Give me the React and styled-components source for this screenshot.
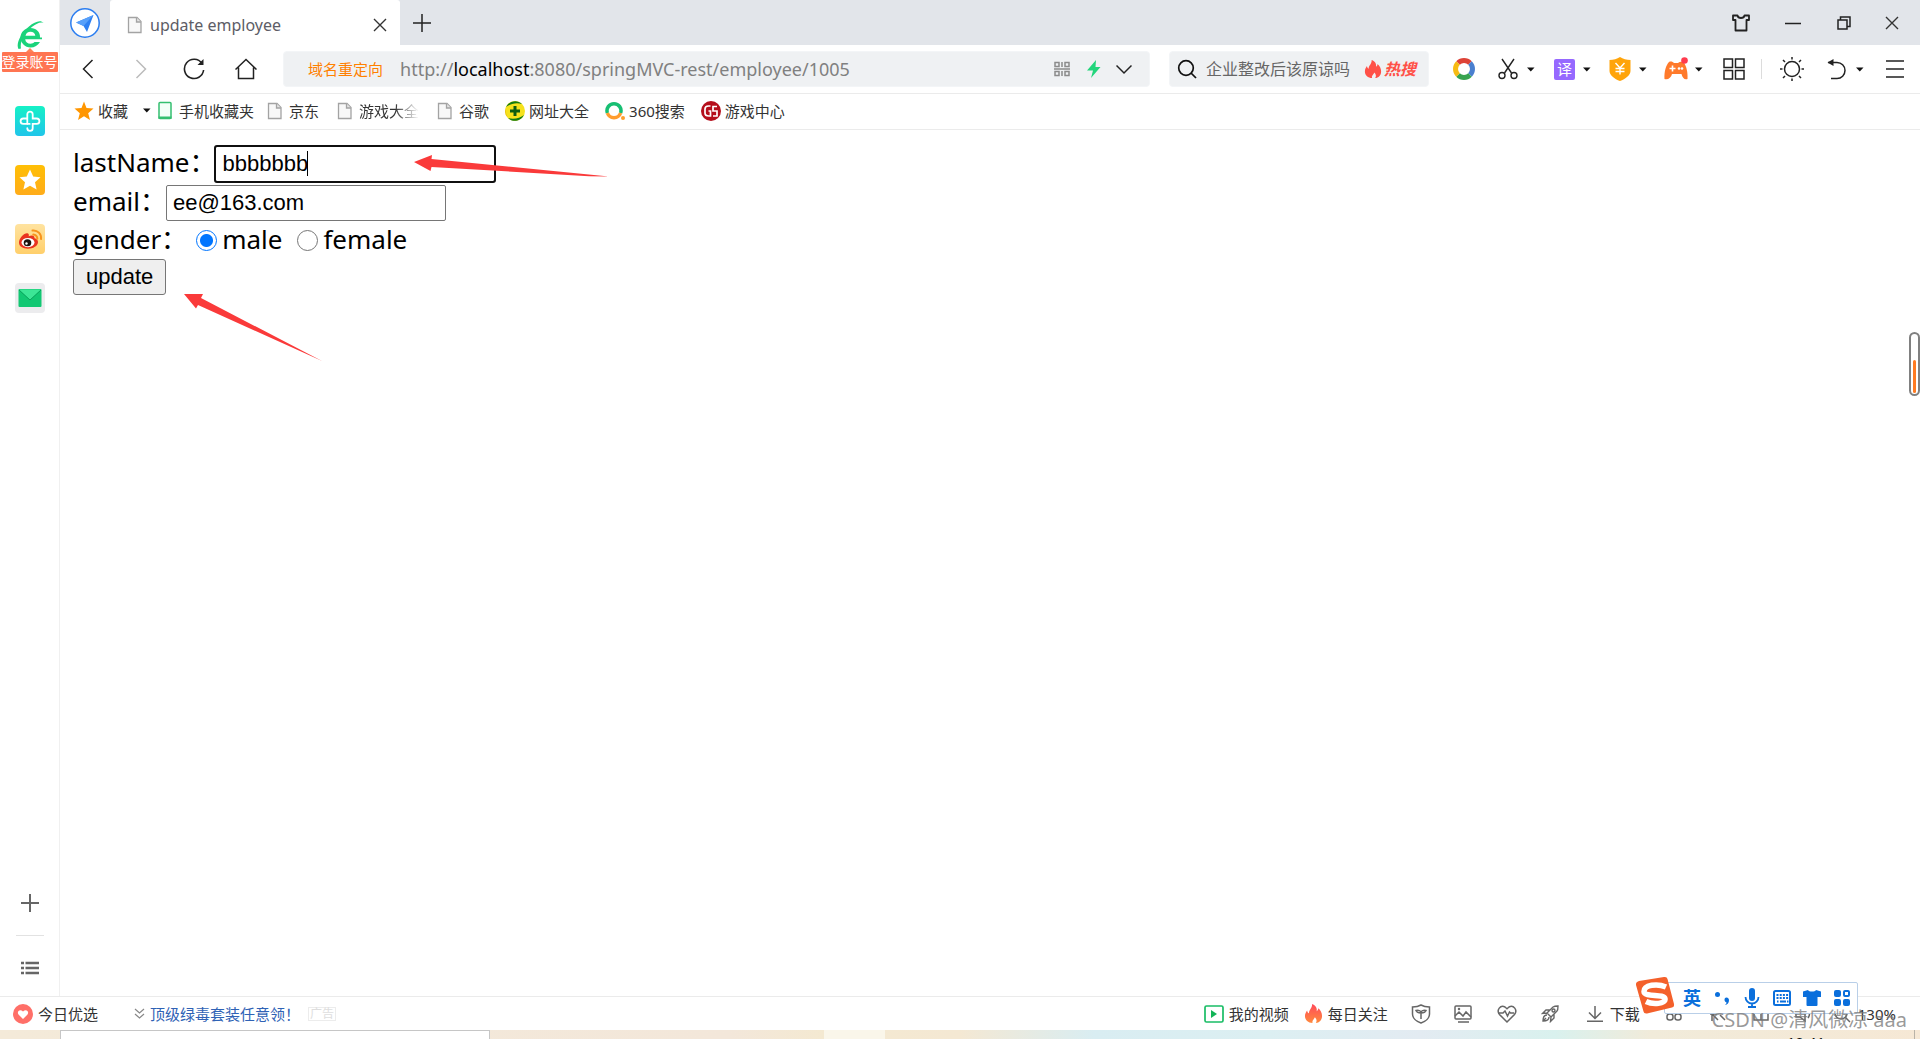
import React, { useState } from "react";
import styled, { createGlobalStyle, css } from "styled-components";

const GlobalStyle = createGlobalStyle`
  * {
    box-sizing: border-box;
  }
  body {
    margin: 0;
    background: #fff;
    color: #333;
    font: 15px/20px "Noto Sans", "Noto Sans CJK SC", sans-serif;
  }
  button, input {
    font: inherit;
    color: inherit;
  }
  a {
    color: inherit;
    text-decoration: none;
  }
  svg {
    display: block;
    flex: none;
  }
`;

const Window = styled.div`
  display: flex;
  flex-direction: column;
  min-height: 100vh;
  overflow: hidden;
`;
const Body = styled.div`
  display: flex;
  flex: 1;
`;
const Main = styled.div`
  display: flex;
  flex-direction: column;
  flex: 1;
  min-width: 0;
`;
const IconButton = styled.button`
  display: flex;
  align-items: center;
  justify-content: center;
  flex: none;
  width: ${(p) => p.$width || 30}px;
  height: 30px;
  padding: 0;
  border: 0;
  background: none;
`;

/* sidebar */
const Sidebar = styled.aside`
  display: flex;
  flex-direction: column;
  align-items: center;
  flex: none;
  width: 60px;
  padding-top: 20px;
  border-right: 1px solid #f0f0f0;
`;
const LoginTag = styled.a`
  width: 56px;
  height: 20px;
  margin-bottom: 34px;
  border-radius: 1px;
  background: #ff7552;
  color: #fff;
  font-size: 14px;
  text-align: center;
`;
const SideLinks = styled.nav`
  display: flex;
  flex-direction: column;
  gap: 29px;
  flex: 1;
`;
const SideDivider = styled.hr`
  width: 28px;
  height: 1px;
  margin: 17px 0;
  border: 0;
  background: #e2e2e2;
`;
const SideBottom = styled.div`
  display: flex;
  flex-direction: column;
  align-items: center;
  padding-bottom: 13px;
`;

/* tab strip */
const TabStrip = styled.header`
  display: flex;
  align-items: center;
  height: 45px;
  padding-right: 4px;
  background: #e2e5ea;
`;
const Tab = styled.div`
  display: flex;
  align-items: center;
  gap: 5px;
  width: 290px;
  height: 45px;
  padding: 5px 4px 0 15px;
  border-radius: 3px 3px 0 0;
  background: #fff;
  color: #5d5d66;
  font-size: 16px;
`;
const TabTitle = styled.span`
  flex: 1;
`;
const Spacer = styled.div`
  flex: 1;
`;

/* toolbar */
const Toolbar = styled.div`
  display: flex;
  align-items: center;
  height: 49px;
  padding: 0 8px 0 2px;
  border-bottom: 1px solid #ebebeb;
`;
const fieldBox = css`
  display: flex;
  align-items: center;
  height: 36px;
  border: 1px solid #f3f5f7;
  border-radius: 4px;
  background: #eff1f3;
`;
const AddressBar = styled.div`
  ${fieldBox}
  flex: 1;
  min-width: 0;
  margin: 0 19px 0 11px;
  padding: 0 10px 0 24px;
`;
const Redirect = styled.span`
  margin-right: 17px;
  color: #ff8000;
  white-space: nowrap;
`;
const Url = styled.div`
  flex: 1;
  overflow: hidden;
  color: #808080;
  font-size: 18px;
  line-height: 26px;
  white-space: nowrap;
  b {
    color: #000;
    font-weight: 400;
  }
`;
const SearchBar = styled.label`
  ${fieldBox}
  width: 260px;
  margin-right: 6px;
  padding: 0 12px 0 2px;
`;
const SearchInput = styled.input`
  flex: 1;
  min-width: 0;
  padding: 0 0 0 4px;
  border: 0;
  outline: 0;
  background: none;
  color: #666;
  font-size: 16px;
`;
const HotSearch = styled.a`
  display: flex;
  align-items: center;
  gap: 2px;
  color: #ff5047;
  font-size: 16px;
  font-style: italic;
  font-weight: 700;
`;
const ToolGroup = styled.div`
  display: flex;
  flex: none;
  width: 56px;
`;
const Separator = styled.i`
  width: 1px;
  height: 20px;
  margin-left: 10px;
  background: #dcdcdc;
`;

/* bookmarks */
const Bookmarks = styled.nav`
  display: flex;
  align-items: center;
  height: 36px;
  padding: 0 0 2px 14px;
  border-bottom: 1px solid #ebebeb;
`;
const Bookmark = styled.a`
  display: flex;
  align-items: center;
  gap: 4px;
  margin-right: ${(p) => (p.$tight ? 11 : 16)}px;
  white-space: nowrap;
`;
const FadedText = styled.span`
  background: linear-gradient(90deg, #333 60%, #fff);
  background-clip: text;
  color: transparent;
`;

/* page */
const Page = styled.main`
  position: relative;
  flex: 1;
  padding: 14px 13px;
`;
const Row = styled.div`
  display: flex;
  align-items: center;
  height: ${(p) => (p.$short ? 37 : 39)}px;
  color: #000;
  font-size: 26px;
  line-height: 34px;
`;
const Label = styled.label`
  padding-bottom: 4px;
`;
const Field = styled.span`
  position: relative;
`;
const TextInput = styled.input`
  display: block;
  width: 280px;
  height: 36px;
  padding: 2px 6px;
  border: 1px solid #767676;
  border-radius: 2px;
  outline: ${(p) => (p.$active ? "2px solid #101010" : "0")};
  outline-offset: -1px;
  background: #fff;
  color: #000;
  font: 22px/28px "Liberation Sans", sans-serif;
`;
const Caret = styled.i`
  position: absolute;
  top: 5px;
  left: 92px;
  width: 1px;
  height: 25px;
  background: #000;
`;
const Radio = styled.input`
  appearance: none;
  width: 21px;
  height: 21px;
  margin: 0 5px 0 ${(p) => (p.$first ? 9 : 15)}px;
  border: 1px solid #767676;
  border-radius: 50%;
  background: #fff;
  &:checked {
    border-color: #0075ff;
    background: radial-gradient(circle, #0075ff 6px, #fff 7px);
  }
`;
const SubmitButton = styled.button`
  display: block;
  height: 36px;
  padding: 0 12px;
  border: 1px solid #767676;
  border-radius: 3px;
  background: #efefef;
  color: #000;
  font: 22px/28px "Liberation Sans", sans-serif;
`;
const Arrow = styled.svg`
  position: absolute;
  top: ${(p) => p.$top}px;
  left: ${(p) => p.$left}px;
  fill: #fa3a3a;
  pointer-events: none;
`;
const Gauge = styled.div`
  position: absolute;
  top: 202px;
  right: 0;
  display: flex;
  align-items: flex-end;
  width: 11px;
  height: 64px;
  padding: 1px 2px;
  border: 2px solid #808080;
  border-radius: 6px;
  &::after {
    content: "";
    width: 3px;
    height: 33px;
    border-radius: 2px;
    background: #ff7b22;
  }
`;

/* status bar */
const StatusBar = styled.footer`
  position: relative;
  display: flex;
  align-items: center;
  height: 34px;
  padding: 0 24px 0 13px;
  border-top: 1px solid #ebebeb;
  color: #333;
`;
const StatusLink = styled.a`
  display: flex;
  align-items: center;
  gap: 5px;
  margin-right: ${(p) => p.$gap || 0}px;
  color: ${(p) => p.$color || "#333"};
  white-space: nowrap;
`;
const StatusTools = styled.div`
  display: flex;
  margin-right: 13px;
`;
const AdTag = styled.span`
  height: 14px;
  padding: 0 1px;
  border: 1px solid #ececec;
  color: #dedede;
  font-size: 12px;
  line-height: 12px;
`;
const Ime = styled.div`
  position: absolute;
  z-index: 1;
  top: -15px;
  right: 62px;
  display: flex;
  align-items: center;
  width: 194px;
  height: 32px;
  padding-left: 12px;
  border: 1px solid #b9cfe8;
  border-radius: 2px;
  background: #fff;
`;
const ImeLogo = styled.svg`
  position: absolute;
  top: -7px;
  left: -30px;
`;
const ImeMode = styled(IconButton)`
  color: #0a6fdc;
  font-size: 18px;
  font-weight: 700;
`;
const Watermark = styled.span`
  position: absolute;
  z-index: 2;
  right: 13px;
  bottom: -3px;
  color: rgba(120, 120, 120, 0.75);
  font-size: 20px;
  line-height: 26px;
  white-space: nowrap;
`;

/* desktop taskbar */
const Taskbar = styled.div`
  display: flex;
  height: 9px;
  padding-left: 60px;
  overflow: hidden;
  background: linear-gradient(
    90deg,
    #f4ead9,
    #f3e7da 38%,
    #f4e9d1 43%,
    #f4e8d3 50%,
    #d9edf2 57%,
    #dceff2 66%,
    #e3ebf2 74%,
    #d9f1ee 81%,
    #f1ebda 86%,
    #f6e8d5
  );
`;
const TaskSearch = styled.div`
  width: 430px;
  border: 1px solid #c6c6c6;
  border-bottom: 0;
  background: #fff;
`;
const TaskActive = styled.div`
  width: 61px;
  margin-left: 334px;
  background: #faf6ea;
`;
const Clock = styled.time`
  margin: 3px 89px 0 auto;
  color: #111;
  font-size: 15px;
  line-height: 18px;
`;
const ShowDesktop = styled.i`
  width: 6px;
  border-left: 1px solid #b9b3a8;
`;

const Icon = ({ size = 22, box = 22, width = 1.5, color = "#222", children }) => (
  <svg
    width={size}
    height={size}
    viewBox={`0 0 ${box} ${box}`}
    fill="none"
    stroke={color}
    strokeWidth={width}
    aria-hidden="true"
  >
    {children}
  </svg>
);

const FileIcon = () => (
  <Icon size={20} box={20} width={1.3} color="#a3a3a3">
    <path d="M3.5 2.5h8.500l4 4V17.500H3.500z" fill="#f8f8f8" />
    <path d="M11.500 2.500v4.500h4.500" fill="#e4e4e4" />
  </Icon>
);

const DropArrow = () => (
  <IconButton $width={16} aria-label="more options">
    <svg width="8" height="5" viewBox="0 0 8 5">
      <path d="M0 .5h7.500L3.800 4.500z" fill="#111" />
    </svg>
  </IconButton>
);

const Close = () => (
  <Icon size={14} box={14} width={1.4} color="#333">
    <path d="M1 1l12 12M13 1L1 13" />
  </Icon>
);

const Flame = ({ id, size, from, to }) => (
  <svg width={size} height={size} viewBox="0 0 18 20">
    <linearGradient id={id} x1="0" x2="0" y1="0" y2="1">
      <stop stopColor={from} />
      <stop offset="1" stopColor={to} />
    </linearGradient>
    <path
      fill={`url(#${id})`}
      d="M7.500 0c4 1.500 5.500 4.500 4.800 7.500 1-.4 1.700-1.500 1.700-3 2.500 2 4 5 4 8.200C18 17 15 20 11.500 20c1.300-2 .8-4-1-6-1 2.500-3.300 3.300-2.500 6C3.500 20 0 17 0 12.700 0 10.500 1 8.500 2.300 6.800c.2 1.600.8 2.500 1.900 3C4 6 7.800 4.500 7.500 0z"
    />
  </svg>
);

const BrowserLogo = () => (
  <svg width="30" height="32" viewBox="0 0 30 32">
    <path
      d="M25 17.500C25.500 12 21 8 15.500 8 10 8 5.500 12 5.500 17.500S10 27.500 15.500 27.500c4 0 7.500-2 9.500-5.500h-5.500c-1 1.200-2.300 1.700-4 1.700-3 0-5-1.700-5.300-4.500H27v-1.700zM10.500 15.700c.5-2.500 2.400-4 5-4s4.500 1.500 4.800 4z"
      fill="#1bd37b"
    />
    <path
      d="M3.500 29C.5 24 6 13 14 6.500 19.500 2 25.500-.5 28.500 3c-3-1.500-7 .5-11 3.500C10 12 4.500 21 6 28.500z"
      fill="#1bd37b"
    />
    <path d="M15 28l4 4h-8z" fill="#ff8256" />
  </svg>
);

const sideLinks = [
  {
    label: "health",
    icon: (
      <>
        <linearGradient id="health" x1="0" x2="0" y1="0" y2="1">
          <stop stopColor="#16f1c6" />
          <stop offset="1" stopColor="#20c5ea" />
        </linearGradient>
        <rect width="30" height="30" rx="4" fill="url(#health)" />
        <path
          d="M12.300 18V8.300a2.700 2.700 0 015.400 0v4.200h4a2.700 2.700 0 010 5.400h-4v4.300a2.700 2.700 0 01-5.400 0M12 12.500H8.300a2.700 2.700 0 000 5.400h6.400"
          fill="none"
          stroke="#fff"
          strokeWidth="1.800"
          strokeLinecap="round"
        />
      </>
    ),
  },
  {
    label: "favorites",
    icon: (
      <>
        <linearGradient id="fav" x1="0" x2="0" y1="0" y2="1">
          <stop stopColor="#ffbf05" />
          <stop offset="1" stopColor="#ffac1a" />
        </linearGradient>
        <rect width="30" height="30" rx="4" fill="url(#fav)" />
        <path
          d="M15 4.500l3.200 7 7.300.8-5.500 4.900 1.600 7.300-6.600-3.700-6.600 3.700 1.600-7.300-5.500-4.900 7.300-.8z"
          fill="#fff"
        />
      </>
    ),
  },
  {
    label: "weibo",
    icon: (
      <>
        <linearGradient id="weibo" x1="0" x2="0" y1="0" y2="1">
          <stop stopColor="#ffe3a0" />
          <stop offset="1" stopColor="#ffcf6b" />
        </linearGradient>
        <rect width="30" height="30" rx="4" fill="url(#weibo)" />
        <path
          d="M4 18.500C4 14 9.500 8.500 12.500 9.200c1.600.4 1.500 2 1.200 3 3-1.300 6-1.200 5.800 2 2.400.6 3.500 2 3.500 3.800 0 4-5 6.700-10 6.700S4 22.500 4 18.500z"
          fill="#e93320"
        />
        <ellipse cx="13" cy="18.600" rx="6.500" ry="4.600" fill="#fff" />
        <ellipse cx="12.500" cy="18.800" rx="3.800" ry="3.500" fill="#1c1310" />
        <circle cx="11.500" cy="19.500" r="1.200" fill="#fff" />
        <path
          d="M17.500 6.500a7.500 7.500 0 018.500 8.500M18.300 10.500a4 4 0 014 4.200"
          fill="none"
          stroke="#f7941d"
          strokeWidth="2"
          strokeLinecap="round"
        />
      </>
    ),
  },
  {
    label: "mail",
    icon: (
      <>
        <rect width="30" height="30" rx="4" fill="#ececee" />
        <rect x="3.500" y="6" width="23" height="18" rx="1" fill="#12c873" />
        <path d="M4 6.500h22L15 17z" fill="#3ce696" />
        <path d="M4 7l11 10L26 7" fill="none" stroke="#0aa45c" />
      </>
    ),
  },
];

const bookmarks = [
  { name: "京东" },
  { name: "游戏大全", faded: true },
  { name: "谷歌" },
  {
    name: "网址大全",
    icon: (
      <svg width="20" height="20" viewBox="0 0 20 20">
        <circle cx="10" cy="10" r="10" fill="#f6e21c" />
        <path d="M1 6C4 0 12-2 17 3 11 1 5 3 1 6zM19 14c-3 6-11 8-16 3 6 2 12 0 16-3z" fill="#137a13" />
        <path d="M1 6a10 10 0 002 11 15 15 0 01-2-11z" fill="#e8bd10" />
        <path d="M10 5v10M5 10h10" stroke="#0d5d10" strokeWidth="3" />
      </svg>
    ),
  },
  {
    name: "360搜索",
    icon: (
      <svg width="20" height="20" viewBox="0 0 20 20" fill="none" strokeWidth="3.500">
        <path d="M2.400 12A7 7 0 1115.600 12" stroke="#18bf73" />
        <path d="M2.400 12a7 7 0 0013.200 0" stroke="#ff9d2e" />
        <circle cx="18" cy="17" r="2" fill="#ff9d2e" />
      </svg>
    ),
  },
  {
    name: "游戏中心",
    icon: (
      <svg width="20" height="20" viewBox="0 0 20 20" fill="none" stroke="#fff" strokeWidth="1.700">
        <circle cx="10" cy="10" r="10" fill="#b50f1c" stroke="none" />
        <path d="M9.500 5H7.500Q4 5 4 8v4q0 3 4 3h1.500v-5H7.500M16 5.500h-4V10h4v5h-4" />
      </svg>
    ),
  },
];

const tools = [
  {
    label: "screenshot",
    icon: (
      <Icon width={1.4}>
        <path d="M5 1l9.500 14M17 1L7.500 15" />
        <circle cx="5" cy="17.500" r="3" />
        <circle cx="17" cy="17.500" r="3" />
      </Icon>
    ),
  },
  {
    label: "translate",
    icon: (
      <svg width="21" height="21" viewBox="0 0 21 21">
        <rect width="21" height="21" rx="2" fill="#9669ff" />
        <text x="3" y="16" fontSize="15" fill="#fff">
          译
        </text>
      </svg>
    ),
  },
  {
    label: "wallet",
    icon: (
      <svg width="22" height="24" viewBox="0 0 22 24">
        <path d="M11 0c3 2 6.500 3 10.500 3v11c0 4-5 8-10.500 10C5.500 22 .5 18 .5 14V3C4.500 3 8 2 11 0z" fill="#ffa40a" />
        <path d="M6.500 6l4.500 5 4.500-5M11 11v6.500M6.500 11.500h9M6.500 14.500h9" fill="none" stroke="#fff" strokeWidth="1.400" />
      </svg>
    ),
  },
  {
    label: "games",
    icon: (
      <svg width="24" height="24" viewBox="0 0 24 24">
        <path
          d="M5 5c2-1 4 0 5 1h4c2-1.500 4-2 6 0 2.500 3 4 10 3.500 16-3 1-5-1-6-5H8c-1 4-4 6-7.500 5C0 15 2 8 5 5z"
          fill="#ff7a2b"
        />
        <path d="M5.500 11.500h6M8.500 8.500v6" stroke="#fff" strokeWidth="1.600" />
        <circle cx="15" cy="11.500" r="1.300" fill="#fff" />
        <circle cx="18" cy="11.500" r="1.300" fill="#fff" />
        <circle cx="20.500" cy="3.500" r="3.300" fill="#ff3b4e" />
      </svg>
    ),
  },
];

const statusTools = [
  {
    label: "protection",
    width: 42,
    icon: (
      <Icon size={20} box={20} color="#666">
        <path d="M10 1c2.500 1.500 5 2 8.500 2v7c0 4-4 7.500-8.500 9C5.500 17.500 1.500 14 1.500 10V3C5 3 7.500 2.500 10 1z" />
        <path d="M10 15V7.500M10 9C8.500 9 6 9 5 6.500c2.500-.5 4.500.3 5 1.800.5-1.500 2.500-2.300 5-1.800C14 9 11.500 9 10 9" />
      </Icon>
    ),
  },
  {
    label: "pictures",
    width: 43,
    icon: (
      <Icon size={18} box={18} color="#666">
        <rect x="1" y="1" width="16" height="13" rx="1" />
        <path d="M1 11l4-4 4 4 3-4 5 5M4 17h11" />
        <circle cx="5" cy="4" r=".5" />
      </Icon>
    ),
  },
  {
    label: "health check",
    width: 44,
    icon: (
      <Icon size={20} box={20} color="#666">
        <path d="M10 18L2.500 10.500C-1 6 3.500.5 8 3l2 1.700L12 3c4.500-2.500 9 3 5.500 7.500z" />
        <path d="M1 9h5l2-2 2.500 5 2-4 1 1H17" />
      </Icon>
    ),
  },
  {
    label: "speed up",
    width: 43,
    icon: (
      <Icon size={18} box={18} width={1.4} color="#666">
        <path d="M6 8l6-6c1.500-1 4-1 5-1 0 1.500 0 4-1 5l-6 6zM6 8l4 4M9 5H5L1.500 8.500 6 8M13 9v4l-3.500 3.500L10 12M6 10c-3 0-4 3-4 6 3 0 6-1 6-4M5 13l-3 3" />
        <circle cx="12.500" cy="5.500" r="1.500" />
      </Icon>
    ),
  },
];

const imeTools = [
  {
    label: "punctuation",
    icon: (
      <svg width="16" height="16" viewBox="0 0 16 16" fill="#0a6fdc">
        <circle cx="3.500" cy="4.500" r="2.500" />
        <path d="M11 8a2.500 2.500 0 014 2c0 3-1.500 4.500-4 5 1-1 1.500-1.500 1.500-2.500C10.500 12 10 9.500 11 8z" />
      </svg>
    ),
  },
  {
    label: "voice",
    icon: (
      <svg width="16" height="20" viewBox="0 0 16 20" fill="#0a6fdc">
        <rect x="5" width="6" height="13" rx="3" />
        <path d="M1.500 9a6.500 6.500 0 0013 0M8 15v4M4 19h8" fill="none" stroke="#0a6fdc" strokeWidth="1.800" />
      </svg>
    ),
  },
  {
    label: "keyboard",
    icon: (
      <svg width="18" height="16" viewBox="0 0 18 16" fill="none" stroke="#0a6fdc">
        <rect x="1" y="1" width="16" height="14" rx="1.500" strokeWidth="2" />
        <path d="M3.500 5h12M3.500 8h12" strokeWidth="2" strokeDasharray="2 1.200" />
        <path d="M4 11.500h1.500M7 11.500h6M14 11.500h1.500" strokeWidth="2" />
      </svg>
    ),
  },
  {
    label: "skin",
    icon: (
      <svg width="18" height="16" viewBox="0 0 18 16" fill="#0a6fdc">
        <path d="M5 0c1 2 7 2 8 0l5 1.500V7h-3.500v8q0 1-1 1h-9q-1 0-1-1V7H0V1.500z" />
      </svg>
    ),
  },
  {
    label: "toolbox",
    icon: (
      <svg width="16" height="16" viewBox="0 0 16 16" fill="#0a6fdc">
        <rect width="7" height="7" rx="2" />
        <rect x="10" y="1" width="5" height="5" rx="1" fill="none" stroke="#0a6fdc" strokeWidth="2" />
        <rect y="9" width="7" height="7" rx="2" />
        <rect x="9" y="9" width="7" height="7" rx="2" />
      </svg>
    ),
  },
];

const App = () => {
  const [lastName, setLastName] = useState("bbbbbbb");
  const [email, setEmail] = useState("ee@163.com");
  const [gender, setGender] = useState("male");

  return (
    <Window>
      <GlobalStyle />
      <Body>
        <Sidebar>
          <BrowserLogo />
          <LoginTag href="#login">登录账号</LoginTag>
          <SideLinks>
            {sideLinks.map((item) => (
              <a href={`#${item.label}`} key={item.label} aria-label={item.label}>
                <svg width="30" height="30" viewBox="0 0 30 30">
                  {item.icon}
                </svg>
              </a>
            ))}
          </SideLinks>
          <SideBottom>
            <IconButton aria-label="add">
              <Icon size={18} box={18} width={2} color="#666">
                <path d="M9 0v18M0 9h18" />
              </Icon>
            </IconButton>
            <SideDivider />
            <IconButton aria-label="list">
              <Icon size={18} box={18} width={2.5} color="#666">
                <path d="M0 4h3M4.500 4H18M0 9h3M4.500 9H18M0 14h3M4.500 14H18" />
              </Icon>
            </IconButton>
          </SideBottom>
        </Sidebar>

        <Main>
          <TabStrip>
            <IconButton $width={50} aria-label="home page">
              <svg width="30" height="30" viewBox="0 0 30 30">
                <circle cx="15" cy="15" r="14.200" fill="#fff" stroke="#2b7df0" strokeWidth="1.500" />
                <path d="M6 14.500L23.500 7 17 24l-3.500-6z" fill="#2f80f2" />
                <path d="M6 14.500L23.500 7l-10 11z" fill="#58a0fa" />
              </svg>
            </IconButton>
            <Tab>
              <FileIcon />
              <TabTitle>update employee</TabTitle>
              <IconButton $width={32} aria-label="close tab">
                <Close />
              </IconButton>
            </Tab>
            <IconButton $width={44} aria-label="new tab">
              <Icon size={18} box={18}>
                <path d="M9 0v18M0 9h18" />
              </Icon>
            </IconButton>
            <Spacer />
            <IconButton $width={50} aria-label="skin">
              <Icon size={20} box={20} width={1.8}>
                <path d="M2 2.500h4.500Q7 5 10 5t3.500-2.500H18V7h-2.500v10.500h-11V7H2z" strokeLinejoin="round" />
              </Icon>
            </IconButton>
            <IconButton $width={54} aria-label="minimize">
              <Icon size={16} box={16}>
                <path d="M0 8.500h16" />
              </Icon>
            </IconButton>
            <IconButton $width={48} aria-label="restore">
              <Icon size={14} box={14}>
                <path d="M1 4h9v9H1zM3.500 4V1H13v9.500h-3" />
              </Icon>
            </IconButton>
            <IconButton $width={48} aria-label="close">
              <Close />
            </IconButton>
          </TabStrip>

          <Toolbar>
            <IconButton $width={52} aria-label="back">
              <Icon size={20} box={20}>
                <path d="M14.500 1L5.500 10l9 9" />
              </Icon>
            </IconButton>
            <IconButton $width={53} aria-label="forward">
              <Icon size={20} box={20} color="#bbb">
                <path d="M5.500 1l9 9-9 9" />
              </Icon>
            </IconButton>
            <IconButton $width={53} aria-label="reload">
              <Icon width={1.6}>
                <path d="M19 5.500A9.600 9.600 0 1020.600 12" />
                <path d="M20.500 1v6h-6z" fill="#222" stroke="none" />
              </Icon>
            </IconButton>
            <IconButton $width={52} aria-label="home">
              <Icon>
                <path d="M.5 11.500L11 1.500l10.500 10M3.500 9.500V20.500h15V9.500" />
              </Icon>
            </IconButton>

            <AddressBar>
              <Redirect>域名重定向</Redirect>
              <Url>
                http://<b>localhost</b>:8080/springMVC-rest/employee/1005
              </Url>
              <IconButton $width={34} aria-label="qr code">
                <Icon size={16} box={16} color="#8b8b8b">
                  <path d="M1 1.500h4v4H1zM11 1.500h4v4h-4zM8 1v5M0 8h16M1 10.500h4v4H1zM11 10.500h4v4h-4zM8 10v5" />
                </Icon>
              </IconButton>
              <IconButton aria-label="speed mode">
                <svg width="14" height="18" viewBox="0 0 14 18">
                  <path d="M9 0L0 10.500h6L4 18l9.500-11H8.500z" fill="#22d57b" />
                </svg>
              </IconButton>
              <IconButton aria-label="history">
                <Icon size={16} box={16}>
                  <path d="M.5 4.500L8 12l7.500-7.500" />
                </Icon>
              </IconButton>
            </AddressBar>

            <SearchBar>
              <IconButton as="span">
                <Icon size={20} box={20} width={1.7} color="#111">
                  <circle cx="9" cy="9" r="7.300" />
                  <path d="M14 14l5 5" />
                </Icon>
              </IconButton>
              <SearchInput aria-label="search" defaultValue="企业整改后该原谅吗" />
              <HotSearch href="#hot">
                <Flame id="hot" size={18} from="#ff5047" to="#ff5047" />
                热搜
              </HotSearch>
            </SearchBar>

            <IconButton $width={58} aria-label="chrome">
              <svg width="22" height="22" viewBox="0 0 22 22" fill="none" strokeWidth="5">
                <path d="M5 5a8.500 8.500 0 0112 0" stroke="#dd4237" />
                <path d="M17 5a8.500 8.500 0 010 12" stroke="#4a7fcf" />
                <path d="M17 17a8.500 8.500 0 01-12 0" stroke="#37a350" />
                <path d="M5 17A8.500 8.500 0 015 5" stroke="#f7bb12" />
              </svg>
            </IconButton>
            {tools.map((tool) => (
              <ToolGroup key={tool.label}>
                <IconButton aria-label={tool.label}>{tool.icon}</IconButton>
                <DropArrow />
              </ToolGroup>
            ))}
            <IconButton $width={34} aria-label="extensions">
              <Icon>
                <path d="M1 1h8.500v8.500H1zM12.500 1H21v8.500h-8.500zM1 12.500h8.500V21H1zM12.500 12.500H21V21h-8.500z" />
              </Icon>
            </IconButton>
            <Separator />
            <IconButton $width={60} aria-label="brightness">
              <Icon size={24} box={24}>
                <circle cx="12" cy="12" r="7.500" />
                <path d="M12 0v2.500M12 21.500V24M0 12h2.500M21.500 12H24M3 3l2 2M19 19l2 2M3 21l2-2M19 5l2-2" />
              </Icon>
            </IconButton>
            <ToolGroup>
              <IconButton aria-label="undo">
                <Icon>
                  <path d="M2 4.500h9a8 8 0 010 16H5" />
                  <path d="M1.500 4.500l6-3.500v7z" fill="#222" stroke="none" />
                </Icon>
              </IconButton>
              <DropArrow />
            </ToolGroup>
            <IconButton $width={34} aria-label="menu">
              <Icon size={18} box={18}>
                <path d="M0 1h18M0 9h18M0 17h18" />
              </Icon>
            </IconButton>
          </Toolbar>

          <Bookmarks>
            <Bookmark href="#favorites" $tight>
              <svg width="20" height="20" viewBox="0 0 20 20">
                <path d="M10 .5l2.500 6.500 7 .5-5.300 4.700L16 19l-6-3.800L4 19l1.800-6.800L.5 7.500l7-.5z" fill="#ff9600" />
              </svg>
              收藏
            </Bookmark>
            <DropArrow />
            <Bookmark href="#mobile" $tight>
              <svg width="20" height="20" viewBox="0 0 20 20">
                <rect x="4" y="1.500" width="12" height="16" rx="1" fill="#f3fff8" stroke="#35bf70" strokeWidth="1.500" />
                <path d="M3.500 15.500h13V18h-13z" fill="#35bf70" />
              </svg>
              手机收藏夹
            </Bookmark>
            {bookmarks.map((item) => (
              <Bookmark href={`#${item.name}`} key={item.name}>
                {item.icon || <FileIcon />}
                {item.faded ? <FadedText>{item.name}</FadedText> : item.name}
              </Bookmark>
            ))}
          </Bookmarks>

          <Page>
            <form onSubmit={(e) => e.preventDefault()}>
              <Row>
                <Label htmlFor="lastName">lastName：</Label>
                <Field>
                  <TextInput
                    id="lastName"
                    $active
                    value={lastName}
                    onChange={(e) => setLastName(e.target.value)}
                  />
                  <Caret />
                </Field>
              </Row>
              <Row>
                <Label htmlFor="email">email：</Label>
                <TextInput id="email" value={email} onChange={(e) => setEmail(e.target.value)} />
              </Row>
              <Row $short>
                <Label as="span">gender：</Label>
                {["male", "female"].map((value) => (
                  <React.Fragment key={value}>
                    <Radio
                      type="radio"
                      name="gender"
                      id={value}
                      $first={value === "male"}
                      checked={gender === value}
                      onChange={() => setGender(value)}
                    />
                    <Label htmlFor={value}>{value}</Label>
                  </React.Fragment>
                ))}
              </Row>
              <SubmitButton>update</SubmitButton>
            </form>
            <Arrow $top={24} $left={354} width="198" height="26" viewBox="0 0 198 26">
              <path d="M0 8L18 1l-.5 4L195 22.500l-20-.3L17.500 13l-1 4z" />
            </Arrow>
            <Arrow $top={164} $left={124} width="140" height="70" viewBox="0 0 140 70">
              <path d="M0 0h19l-2 4L138 67 14 11l-2 3.500z" />
            </Arrow>
            <Gauge />
          </Page>
        </Main>
      </Body>

      <StatusBar>
        <StatusLink href="#today" $gap={36}>
          <svg width="20" height="20" viewBox="0 0 20 20">
            <circle cx="10" cy="10" r="10" fill="#ff6f68" />
            <path d="M10 15L5.500 10.500C3.500 8 6.500 4.500 10 7.500c3.500-3 6.500.5 4.500 3z" fill="#fff" />
          </svg>
          今日优选
        </StatusLink>
        <StatusLink href="#ad" $gap={8} $color="#2f62b5">
          <Icon size={11} box={11} width={1.2} color="#888">
            <path d="M1 1l4.500 4L10 1M1 6l4.500 4L10 6" />
          </Icon>
          顶级绿毒套装任意领！
        </StatusLink>
        <AdTag>广告</AdTag>
        <Spacer />
        <StatusLink href="#video" $gap={15}>
          <svg width="20" height="18" viewBox="0 0 20 18">
            <rect x="1" y="1" width="18" height="16" rx="1.500" fill="none" stroke="#19bd65" strokeWidth="1.700" />
            <path d="M7 5l6 4-6 4z" fill="#12b457" />
          </svg>
          我的视频
        </StatusLink>
        <StatusLink href="#daily" $gap={12}>
          <Flame id="daily" size={19} from="#ff4a5a" to="#ff8a3d" />
          每日关注
        </StatusLink>
        <StatusTools>
          {statusTools.map((tool) => (
            <IconButton key={tool.label} $width={tool.width} aria-label={tool.label}>
              {tool.icon}
            </IconButton>
          ))}
        </StatusTools>
        <StatusLink href="#downloads" $gap={13}>
          <IconButton as="span" $width={20}>
            <Icon size={16} box={16} color="#666">
              <path d="M8 0v12M2 6.500l6 6 6-6M0 15.300h16" />
            </Icon>
          </IconButton>
          下载
        </StatusLink>
        <IconButton $width={44} aria-label="browser mode">
          <Icon size={18} box={18} color="#666">
            <rect x="1" y="9" width="6" height="6" rx="2.500" />
            <rect x="9" y="9" width="6" height="6" rx="2.500" />
          </Icon>
        </IconButton>
        <IconButton $width={43} aria-label="float window">
          <Icon size={18} box={18} color="#666">
            <path d="M1 9h7M3 16V9l6 6M11 10l5 5" />
          </Icon>
        </IconButton>
        <IconButton $width={43} aria-label="split screen">
          <Icon size={18} box={18} color="#666">
            <path d="M2 2h14v13H2zM9 2v13" />
          </Icon>
        </IconButton>
        <IconButton $width={43} aria-label="sound">
          <Icon size={18} box={18} color="#666">
            <path d="M1 6h4l5-4v14l-5-4H1zM13 5q3 4 0 8" />
          </Icon>
        </IconButton>
        <IconButton $width={32} aria-label="zoom">
          <Icon size={18} box={18} color="#666">
            <circle cx="8" cy="8" r="6" />
            <path d="M12 12l5 5" />
          </Icon>
        </IconButton>
        130%
        <Ime>
          <ImeLogo width="40" height="40" viewBox="0 0 40 40">
            <path d="M4 5L29 1q3-.5 3.500 2L39 28q.5 3-2 3.500L12 37.500q-3 .5-3.500-2L1 9Q.5 6 4 5z" fill="#f4602b" />
            <path
              d="M31 11C22 7 9 9 9 15.500c0 6 20 2 21 7C31 28 18 29 11 25.500"
              fill="none"
              stroke="#fff"
              strokeWidth="5.500"
            />
          </ImeLogo>
          <ImeMode>英</ImeMode>
          {imeTools.map((tool) => (
            <IconButton key={tool.label} aria-label={tool.label}>
              {tool.icon}
            </IconButton>
          ))}
        </Ime>
        <Watermark>CSDN @清风微凉 aaa</Watermark>
      </StatusBar>

      <Taskbar>
        <TaskSearch />
        <TaskActive />
        <Clock>10:41</Clock>
        <ShowDesktop />
      </Taskbar>
    </Window>
  );
};

export default App;
